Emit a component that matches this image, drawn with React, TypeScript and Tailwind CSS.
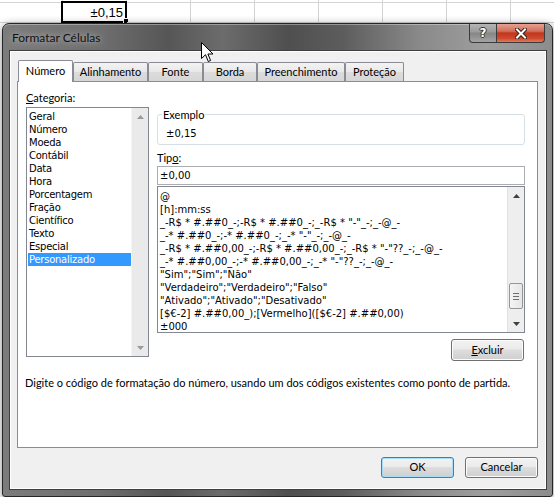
import React from "react";

const UI = "font-['Lato',sans-serif] text-[11px] text-black";
const TH = "font-['DejaVu_Sans',sans-serif] text-[10px] text-black";

const categories = [
  "Geral",
  "Número",
  "Moeda",
  "Contábil",
  "Data",
  "Hora",
  "Porcentagem",
  "Fração",
  "Científico",
  "Texto",
  "Especial",
  "Personalizado",
];

const formats = [
  "@",
  "[h]:mm:ss",
  '_-R$ * #.##0_-;-R$ * #.##0_-;_-R$ * "-"_-;_-@_-',
  '_-* #.##0_-;-* #.##0_-;_-* "-"_-;_-@_-',
  '_-R$ * #.##0,00_-;-R$ * #.##0,00_-;_-R$ * "-"??_-;_-@_-',
  '_-* #.##0,00_-;-* #.##0,00_-;_-* "-"??_-;_-@_-',
  '"Sim";"Sim";"Não"',
  '"Verdadeiro";"Verdadeiro";"Falso"',
  '"Ativado";"Ativado";"Desativado"',
  "[$€-2] #.##0,00_);[Vermelho]([$€-2] #.##0,00)",
  "±000",
];

const tabs = [
  { label: "Número", w: "w-[55px]", active: true },
  { label: "Alinhamento", w: "w-[75px]", active: false },
  { label: "Fonte", w: "w-[55px]", active: false },
  { label: "Borda", w: "w-[54px]", active: false },
  { label: "Preenchimento", w: "w-[88px]", active: false },
  { label: "Proteção", w: "w-[59px]", active: false },
];

function Arrow({ up, color }: { up: boolean; color: string }) {
  return (
    <svg width="7" height="4" viewBox="0 0 7 4">
      {up ? (
        <path d="M3.5 0 L7 4 H0 Z" fill={color} />
      ) : (
        <path d="M0 0 H7 L3.5 4 Z" fill={color} />
      )}
    </svg>
  );
}

function Sheet() {
  const cols = [0, 1, 2, 3, 4, 5, 6, 7, 8];
  return (
    <div className="flex h-full">
      {cols.map((i) => (
        <div
          key={i}
          className={`${i === 0 ? "w-[63px]" : "w-[64px]"} shrink-0 h-full border-r border-[#d4d4d4] flex flex-col`}
        >
          <div className="h-[3px] border-b border-[#d4d4d4]" />
          <div className="relative h-[20px] border-b border-[#d4d4d4] flex items-center justify-end pr-[3px]">
            {i === 1 && (
              <>
                <span className="font-['Liberation_Sans',sans-serif] text-[13px] text-black leading-[16px]">±0,15</span>
                <div className="absolute -left-[2px] -top-[2px] w-[66px] h-[22px] border-2 border-black" />
                <div className="absolute -right-[3px] -bottom-[2px] w-[6px] h-[6px] bg-black border border-white" />
              </>
            )}
          </div>
        </div>
      ))}
    </div>
  );
}

function Btn({ children, def }: { children: React.ReactNode; def?: boolean }) {
  return (
    <div
      className={`${UI} w-[73px] h-[21px] rounded-[3px] border flex items-center justify-center bg-[linear-gradient(180deg,#f2f2f2_0%,#ebebeb_45%,#dddddd_50%,#cfcfcf_100%)] ${
        def
          ? "border-[#3c7fb1] shadow-[inset_0_0_0_1px_#a9dcf6]"
          : "border-[#707070] shadow-[inset_0_0_0_1px_#fcfcfc]"
      }`}
    >
      {children}
    </div>
  );
}

function CategoryList() {
  return (
    <div className="mt-[2px] w-[123px] h-[250px] border border-[#828790] bg-white flex">
      <div className="flex-1 pt-[2px] pl-[1px] flex flex-col">
        {categories.map((c) => (
          <div
            key={c}
            className={`${TH} h-[13px] leading-[13px] pl-[1px] tracking-[-0.25px] ${
              c === "Personalizado" ? "bg-[#3399ff] text-white" : ""
            }`}
          >
            {c}
          </div>
        ))}
      </div>
      <div className="w-[17px] h-full bg-[#eaeaea] border-l border-[#f4f4f4] flex flex-col">
        <div className="h-[17px] flex items-center justify-center">
          <Arrow up color="#9a9a9a" />
        </div>
        <div className="flex-1" />
        <div className="h-[17px] flex items-center justify-center">
          <Arrow up={false} color="#9a9a9a" />
        </div>
      </div>
    </div>
  );
}

function FormatList() {
  return (
    <div className="mt-[1px] h-[147px] border border-[#828790] bg-white flex">
      <div className="flex-1 pt-[3px] pl-[2px] flex flex-col overflow-hidden">
        {formats.map((f, i) => (
          <div key={i} className={`${TH} h-[13px] leading-[13px] whitespace-pre`}>
            {f}
          </div>
        ))}
      </div>
      <div className="w-[17px] h-full bg-[#eeeeee] border-l border-[#e2e2e2] flex flex-col">
        <div className="h-[17px] flex items-center justify-center">
          <Arrow up color="#404040" />
        </div>
        <div className="flex-1 flex flex-col">
          <div className="h-[79px]" />
          <div className="mx-[1px] h-[26px] rounded-[2px] border border-[#979797] bg-[linear-gradient(90deg,#f4f4f4,#e6e6e6)] flex flex-col items-center justify-center gap-[2px]">
            <div className="w-[6px] h-[1px] bg-[#6f6f6f]" />
            <div className="w-[6px] h-[1px] bg-[#6f6f6f]" />
            <div className="w-[6px] h-[1px] bg-[#6f6f6f]" />
          </div>
          <div className="flex-1" />
        </div>
        <div className="h-[17px] flex items-center justify-center">
          <Arrow up={false} color="#404040" />
        </div>
      </div>
    </div>
  );
}

function Panel() {
  return (
    <div className="ml-[7px] w-[521px] h-[367px] border border-[#898c95] bg-white flex flex-col">
      <div className="flex">
        <div className="ml-[8px] w-[123px] flex flex-col">
          <div className={`${UI} mt-[8px] h-[15px] leading-[15px]`}>
            <span className="underline">C</span>ategoria:
          </div>
          <CategoryList />
        </div>
        <div className="ml-[8px] w-[368px] flex flex-col">
          <fieldset className="mt-[25px] border border-[#d5dfe5] rounded-[3px] px-[4px] pb-[4px]">
            <legend className={`${UI} px-[1px] leading-[15px]`}>Exemplo</legend>
            <div className={`${TH} ml-[4px] mt-[5px] leading-[13px]`}>±0,15</div>
          </fieldset>
          <div className={`${UI} mt-[5px] h-[15px] leading-[15px]`}>
            Tip<span className="underline">o</span>:
          </div>
          <div className={`${TH} mt-[1px] h-[19px] border border-[#abadb3] pl-[2px] flex items-center`}>±0,00</div>
          <FormatList />
          <div className="mt-[6px] self-end mr-[1px]">
            <div
              className={`${UI} w-[73px] h-[22px] rounded-[3px] border border-[#707070] shadow-[inset_0_0_0_1px_#fcfcfc] flex items-center justify-center bg-[linear-gradient(180deg,#f2f2f2_0%,#ebebeb_45%,#dddddd_50%,#cfcfcf_100%)]`}
            >
              <span>
                <span className="underline">E</span>xcluir
              </span>
            </div>
          </div>
        </div>
      </div>
      <div className={`${UI} mt-[14px] pl-[7px] leading-[15px] whitespace-nowrap`}>
        Digite o código de formatação do número, usando um dos códigos existentes como ponto de partida.
      </div>
    </div>
  );
}

function Dialog() {
  return (
    <div className="absolute left-[2px] top-[23px] w-[551px] h-[474px] rounded-t-[7px] rounded-b-[3px] border border-[#262626] bg-[linear-gradient(90deg,#7c7c7c_0%,#6e6e6e_18%,#565656_30%,#6c6c6c_40%,#4f4f4f_52%,#5d5d5d_62%,#8a8a8a_76%,#9e9e9e_88%,#8c8c8c_100%)] shadow-[0_2px_10px_rgba(0,0,0,0.45),inset_0_1px_0_rgba(255,255,255,0.35)] flex flex-col">
      <div className="h-[26px] shrink-0 flex items-start">
        <div className="flex-1 h-full flex items-center pl-[9px] pt-[2px]">
          <span className="font-['Lato',sans-serif] text-[12px] text-[#111] [text-shadow:0_0_6px_rgba(255,255,255,0.7)]">Formatar Células</span>
        </div>
        <div className="flex mr-[7px]">
          <div className="w-[28px] h-[19px] border border-[#3b3b3b] border-t-0 rounded-bl-[4px] bg-[linear-gradient(180deg,#b5b5b5_0%,#9a9a9a_45%,#858585_50%,#a3a3a3_100%)] flex items-center justify-center">
            <span className="font-['DejaVu_Sans',sans-serif] font-bold text-[12px] leading-[12px] text-white [text-shadow:1px_0_#333,-1px_0_#333,0_1px_#333,0_-1px_#333]">?</span>
          </div>
          <div className="w-[48px] h-[19px] border border-[#3b3b3b] border-t-0 border-l-0 rounded-br-[4px] bg-[linear-gradient(180deg,#e8a090_0%,#d0705c_40%,#c2361c_50%,#cf4a2e_80%,#e27a5c_100%)] flex items-center justify-center">
            <svg width="12" height="11" viewBox="0 0 12 11">
              <path d="M2 1.5 L10 9.5 M10 1.5 L2 9.5" stroke="#3a1a14" strokeWidth="4" strokeLinecap="square" />
              <path d="M2 1.5 L10 9.5 M10 1.5 L2 9.5" stroke="#ffffff" strokeWidth="2" strokeLinecap="square" />
            </svg>
          </div>
        </div>
      </div>
      <div className="ml-[6px] w-[538px] h-[440px] border border-[#3e3e3e] bg-[#f0f0f0] shadow-[inset_0_0_0_1px_#ffffff] flex flex-col">
        <div className="pt-[9px] pl-[8px] h-[30px] flex items-end">
          {tabs.map((t) =>
            t.active ? (
              <div
                key={t.label}
                className={`${UI} ${t.w} relative z-10 h-[22px] -mb-[1px] bg-white border border-b-0 border-[#898c95] rounded-t-[2px] flex items-center justify-center pb-[1px]`}
              >
                {t.label}
              </div>
            ) : (
              <div
                key={t.label}
                className={`${UI} ${t.w} h-[19px] border border-b-0 border-[#898c95] rounded-t-[2px] bg-[linear-gradient(180deg,#f3f3f3_0%,#e8e8e8_50%,#dcdcdc_51%,#d6d6d6_100%)] flex items-center justify-center`}
              >
                {t.label}
              </div>
            )
          )}
        </div>
        <Panel />
        <div className="mt-[9px] pr-[8px] flex justify-end gap-[11px]">
          <Btn def>OK</Btn>
          <Btn>Cancelar</Btn>
        </div>
      </div>
    </div>
  );
}

function Cursor() {
  return (
    <div className="absolute left-[201px] top-[42px]">
      <svg width="13" height="21" viewBox="0 0 13 21">
        <path d="M0.5 0.5 V16.5 L4.5 12.7 L7.3 19.5 L9.6 18.5 L6.9 12 H12 Z" fill="#ffffff" stroke="#000000" strokeWidth="1" strokeLinejoin="miter" />
      </svg>
    </div>
  );
}

export default function App() {
  return (
    <div className="relative w-[554px] h-[497px] overflow-hidden bg-white">
      <Sheet />
      <Dialog />
      <Cursor />
    </div>
  );
}
